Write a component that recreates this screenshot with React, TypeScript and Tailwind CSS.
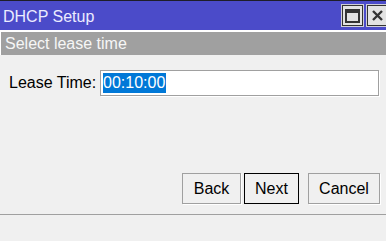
export default function App() {
  return (
    <div className="w-[386px] h-[241px] bg-[#f0f0f0] overflow-hidden flex flex-col font-['Liberation_Sans',Arial,sans-serif] text-[16px] leading-[16px]">
      {/* Title bar */}
      <div className="h-[30px] shrink-0 border-t border-[#1e1e2a] bg-[#4b4bc9] flex items-start overflow-hidden">
        <div className="flex-1 pl-[3px] pt-[8px] text-[#ececff]">DHCP Setup</div>
        <div className="flex gap-[2px] mt-[3px] mr-[-3px] shrink-0">
          <div className="w-[23px] h-[23px] border border-[#cfcfd8] bg-[#e2e2e2] shrink-0">
            <div className="w-full h-full border border-[#333] flex items-center justify-center">
              <div className="w-[15px] h-[14px] border-2 border-t-4 border-[#333]" />
            </div>
          </div>
          <div className="w-[23px] h-[23px] border border-[#cfcfd8] bg-[#e2e2e2] shrink-0">
            <div className="w-full h-full border border-[#333] flex items-center justify-center">
              <svg width="11" height="11" viewBox="0 0 11 11">
                <path d="M1 1L10 10M10 1L1 10" stroke="#333" strokeWidth="2.4" />
              </svg>
            </div>
          </div>
        </div>
      </div>

      {/* Step header */}
      <div className="bg-white pt-[2px] pl-px shrink-0">
        <div className="h-[23px] bg-[#a0a0a0] pl-[4px] pt-[4px] text-[#f6f6f6]">Select lease time</div>
      </div>

      {/* Lease time row */}
      <div className="mt-[15px] pl-[9px] pr-[7px] flex items-center justify-between shrink-0">
        <span className="text-black">Lease Time:</span>
        <div className="w-[279px] h-[26px] border border-[#a0a0a0] bg-white pt-[2px] pl-[2px] shadow-[1px_1px_0_#ffffff]">
          <span className="inline-block bg-[#0078d7] text-white leading-[20px] pr-px">00:10:00</span>
        </div>
      </div>

      <div className="flex-1" />

      {/* Buttons */}
      <div className="flex justify-end pr-[6px] shrink-0">
        <button className="w-[59px] h-[31px] border border-[#a0a0a0] bg-[#f0f0f0] text-black shadow-[1px_1px_0_#ffffff]">Back</button>
        <button className="w-[55px] h-[31px] ml-[3px] border border-black bg-[#f0f0f0] text-black">Next</button>
        <button className="w-[72px] h-[31px] ml-[9px] border border-[#a0a0a0] bg-[#f0f0f0] text-black shadow-[1px_1px_0_#ffffff]">Cancel</button>
      </div>

      <div className="mt-[10px] h-px bg-[#a0a0a0] shrink-0" />
      <div className="h-[26px] shrink-0" />
    </div>
  );
}
